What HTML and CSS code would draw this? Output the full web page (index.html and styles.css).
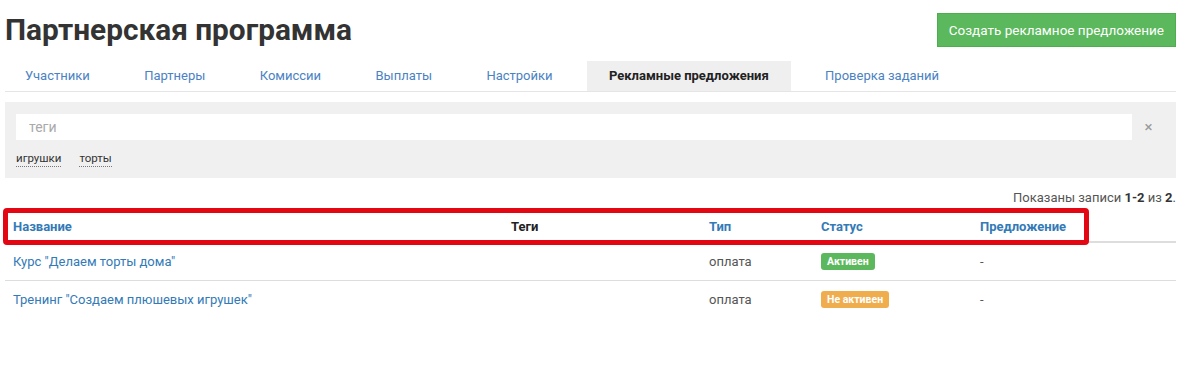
FILE: index.html
```html
<!DOCTYPE html>
<html lang="ru">
<head>
    <meta charset="UTF-8">
    <title>Партнерская программа</title>
    <link rel="stylesheet" href="styles.css">
</head>
<body>
    <div class="container">
        <div class="header">
            <h1>Партнерская программа</h1>
            <button class="create-btn">Создать рекламное предложение</button>
        </div>

        <ul class="tabs">
            <li><a href="#">Участники</a></li>
            <li><a href="#">Партнеры</a></li>
            <li><a href="#">Комиссии</a></li>
            <li><a href="#">Выплаты</a></li>
            <li><a href="#">Настройки</a></li>
            <li class="active"><a href="#">Рекламные предложения</a></li>
            <li><a href="#">Проверка заданий</a></li>
        </ul>

        <div class="filter-panel">
            <div class="search-row">
                <input type="text" class="tag-input" placeholder="теги">
                <span class="clear">&times;</span>
            </div>
            <div class="tag-list">
                <a href="#" class="tag">игрушки</a>
                <a href="#" class="tag">торты</a>
            </div>
        </div>

        <div class="summary">Показаны записи <b>1-2</b> из <b>2</b>.</div>

        <div class="table-wrap">
            <table class="offers">
                <colgroup>
                    <col class="col-name">
                    <col class="col-tags">
                    <col class="col-type">
                    <col class="col-status">
                    <col>
                </colgroup>
                <thead>
                    <tr>
                        <th><a href="#">Название</a></th>
                        <th>Теги</th>
                        <th><a href="#">Тип</a></th>
                        <th><a href="#">Статус</a></th>
                        <th><a href="#">Предложение</a></th>
                    </tr>
                </thead>
                <tbody>
                    <tr>
                        <td><a href="#">Курс "Делаем торты дома"</a></td>
                        <td></td>
                        <td>оплата</td>
                        <td><span class="label label-success">Активен</span></td>
                        <td>-</td>
                    </tr>
                    <tr>
                        <td><a href="#">Тренинг "Создаем плюшевых игрушек"</a></td>
                        <td></td>
                        <td>оплата</td>
                        <td><span class="label label-warning">Не активен</span></td>
                        <td>-</td>
                    </tr>
                </tbody>
            </table>
            <div class="highlight"></div>
        </div>
    </div>
</body>
</html>
```

FILE: styles.css
```css
* {
    margin: 0;
    padding: 0;
    box-sizing: border-box;
}

body {
    background: #fff;
    color: #555;
    font-family: Roboto, "Noto Sans", sans-serif;
    font-size: 13px;
}

a {
    color: #337ab7;
    text-decoration: none;
}

.container {
    width: 1171px;
    margin-left: 5px;
}

.header {
    display: flex;
    justify-content: space-between;
    align-items: center;
    padding-top: 13px;
}

.header h1 {
    font-size: 29.8px;
    line-height: 34px;
    font-weight: 700;
    color: #333;
}

.create-btn {
    height: 34px;
    padding: 0 11px;
    background: #5cb85c;
    border: 1px solid #4cae4c;
    color: #fff;
    font-family: inherit;
    font-size: 13.5px;
    cursor: pointer;
}

.tabs {
    display: flex;
    gap: 14.4px;
    list-style: none;
    margin-top: 14px;
    border-bottom: 1px solid #e5e5e5;
}

.tabs li a {
    display: block;
    padding: 0 20px;
    line-height: 30px;
    font-size: 13px;
    color: #4a82c3;
}

.tabs li.active a {
    background: #efefef;
    color: #222;
    font-weight: 700;
    padding: 0 22px;
}

.filter-panel {
    margin-top: 10px;
    background: #f0f0f0;
    padding: 12px 11px 11px;
}

.search-row {
    display: flex;
    align-items: center;
}

.tag-input {
    flex: 1;
    height: 26px;
    border: none;
    background: #fff;
    padding: 0 13px;
    font-family: inherit;
    font-size: 14px;
    color: #555;
    outline: none;
}

.tag-input::placeholder {
    color: #aaa;
}

.clear {
    width: 33px;
    text-align: center;
    color: #999;
    font-size: 15px;
}

.tag-list {
    display: flex;
    gap: 18px;
    margin-top: 10px;
    line-height: 16px;
}

.tag {
    color: #333;
    font-size: 11.5px;
    border-bottom: 1px dotted #777;
}

.summary {
    margin-top: 12px;
    line-height: 16px;
    text-align: right;
    font-size: 13px;
}

.summary b {
    color: #333;
}

.table-wrap {
    position: relative;
    margin-top: 5px;
}

.offers {
    width: 100%;
    border-collapse: collapse;
    table-layout: fixed;
}

.col-name { width: 499px; }
.col-tags { width: 197px; }
.col-type { width: 112px; }
.col-status { width: 159px; }

.offers th {
    height: 31px;
    padding: 0 8px;
    text-align: left;
    font-weight: 700;
    color: #222;
    border-bottom: 2px solid #ddd;
}

.offers th:nth-child(2) {
    padding-left: 7px;
}

.offers td {
    height: 38px;
    padding: 0 8px;
    border-bottom: 1px solid #ddd;
    color: #555;
}

.offers tbody tr:last-child td {
    border-bottom: none;
}

.label {
    display: inline-block;
    padding: 3px 6px;
    border-radius: 3px;
    font-size: 10.5px;
    font-weight: 700;
    color: #fff;
    line-height: 11px;
}

.label-success {
    background: #5cb85c;
}

.label-warning {
    background: #f0ad4e;
}

.highlight {
    position: absolute;
    left: -2px;
    top: -3px;
    width: 1086px;
    height: 37px;
    border: 5px solid #e30613;
    border-radius: 4px;
    pointer-events: none;
}
```
